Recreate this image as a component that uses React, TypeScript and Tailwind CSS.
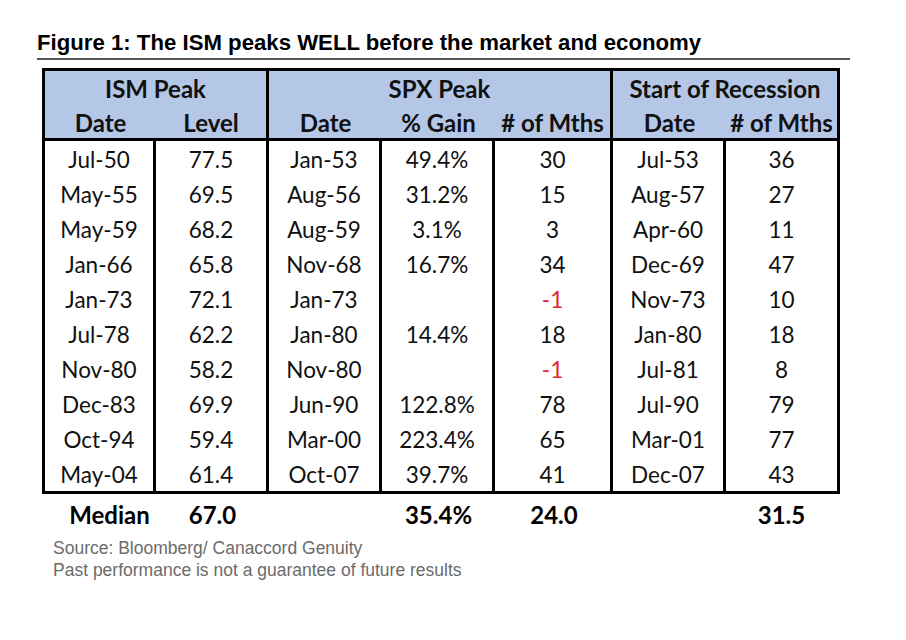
const rows: [string, string, string, string, string, string, string][] = [
  ["Jul-50", "77.5", "Jan-53", "49.4%", "30", "Jul-53", "36"],
  ["May-55", "69.5", "Aug-56", "31.2%", "15", "Aug-57", "27"],
  ["May-59", "68.2", "Aug-59", "3.1%", "3", "Apr-60", "11"],
  ["Jan-66", "65.8", "Nov-68", "16.7%", "34", "Dec-69", "47"],
  ["Jan-73", "72.1", "Jan-73", "", "-1", "Nov-73", "10"],
  ["Jul-78", "62.2", "Jan-80", "14.4%", "18", "Jan-80", "18"],
  ["Nov-80", "58.2", "Nov-80", "", "-1", "Jul-81", "8"],
  ["Dec-83", "69.9", "Jun-90", "122.8%", "78", "Jul-90", "79"],
  ["Oct-94", "59.4", "Mar-00", "223.4%", "65", "Mar-01", "77"],
  ["May-04", "61.4", "Oct-07", "39.7%", "41", "Dec-07", "43"],
]

// column widths include each cell's 3px right rule
const cols = "grid grid-cols-[111px_113px_113px_113px_118px_113px_111px]"

export default function App() {
  return (
    <div className="w-[906px] h-[640px] bg-white pt-[28px]">
      <div className="ml-[37px] w-[813px] border-b-2 border-[#555]">
        <h1 className="font-['Liberation_Sans',Arial,sans-serif] font-bold text-[22.2px] leading-[30px] text-black">
          Figure 1: The ISM peaks WELL before the market and economy
        </h1>
      </div>

      <div className="ml-[42px] mt-[8px] w-[798px] font-['Lato',Calibri,sans-serif] text-[#111]">
        <div className="border-[3px] border-black">
          <div className="bg-[#b4c7e7] border-b-[3px] border-black font-bold text-[24px]">
            <div className={`${cols} h-[34px]`}>
              <div className="col-span-2 border-r-[3px] border-black flex items-center justify-center">
                ISM Peak
              </div>
              <div className="col-span-3 border-r-[3px] border-black flex items-center justify-center">
                SPX Peak
              </div>
              <div className="col-span-2 flex items-center justify-center">
                Start of Recession
              </div>
            </div>
            <div className={`${cols} h-[33px]`}>
              <div className="flex items-center justify-center">Date</div>
              <div className="border-r-[3px] border-black flex items-center justify-center">Level</div>
              <div className="flex items-center justify-center">Date</div>
              <div className="flex items-center justify-center">% Gain</div>
              <div className="border-r-[3px] border-black flex items-center justify-center whitespace-nowrap">
                # of Mths
              </div>
              <div className="flex items-center justify-center">Date</div>
              <div className="flex items-center justify-center whitespace-nowrap"># of Mths</div>
            </div>
          </div>

          <div className="text-[22.5px]">
            {rows.map((r, i) => (
              <div key={i} className={`${cols} h-[35px]`}>
                {r.map((v, j) => (
                  <div
                    key={j}
                    className={`flex items-center justify-center pt-[2px] ${
                      j < 6 ? "border-r-[3px] border-black" : ""
                    } ${v.startsWith("-") ? "text-[#e3262a]" : ""}`}
                  >
                    {v}
                  </div>
                ))}
              </div>
            ))}
          </div>
        </div>

        <div className={`${cols} h-[42px] ml-[3px] font-bold text-[24px] text-black`}>
          <div className="flex items-center justify-center pl-[18px]">Median</div>
          <div className="flex items-center justify-center">67.0</div>
          <div />
          <div className="flex items-center justify-center">35.4%</div>
          <div className="flex items-center justify-center">24.0</div>
          <div />
          <div className="flex items-center justify-center">31.5</div>
        </div>
      </div>

      <div className="ml-[53px] mt-[1px] font-['Liberation_Sans',Arial,sans-serif] text-[17.5px] leading-[22px] text-[#6b6b6b]">
        <p>Source: Bloomberg/ Canaccord Genuity</p>
        <p>Past performance is not a guarantee of future results</p>
      </div>
    </div>
  )
}
